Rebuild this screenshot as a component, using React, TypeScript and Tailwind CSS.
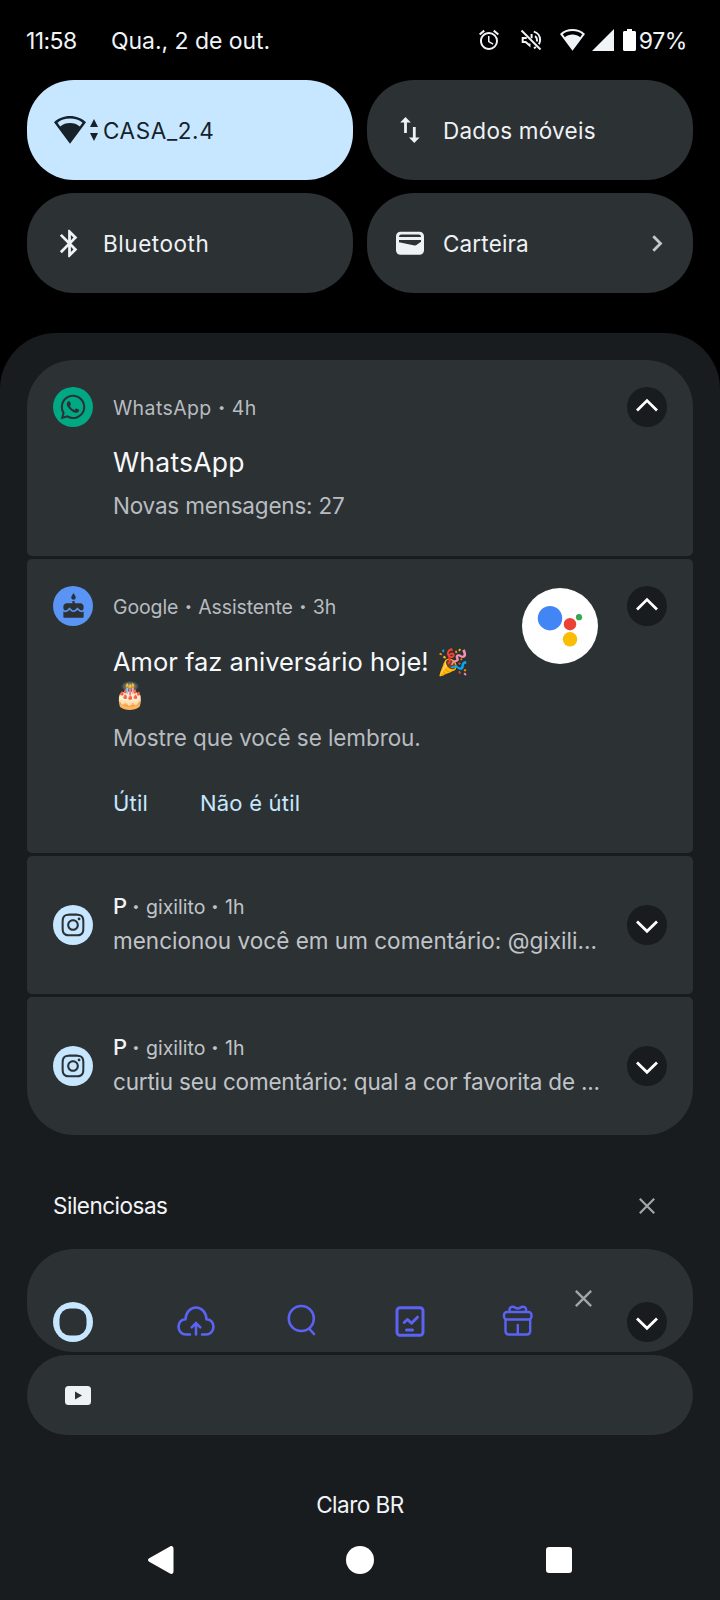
import React from "react";
import { FaInstagram, FaWhatsapp } from "react-icons/fa";
import { MdAlarm, MdBluetooth, MdCake } from "react-icons/md";

interface ExpandButtonProps {
  open?: boolean;
}

const ExpandButton: React.FC<ExpandButtonProps> = ({ open = false }) => (
  <div className="w-10 h-10 shrink-0 rounded-full bg-[#181c1e] flex items-center justify-center">
    <svg width="24" height="24" viewBox="0 0 24 24" fill="none" stroke="#fff" strokeWidth="2.8">
      <path d={open ? "M2 15.400 12 5.600l10 9.800" : "M2 8.400 12 18.200l10-9.800"} />
    </svg>
  </div>
);

const CloseIcon: React.FC<{ size: number }> = ({ size }) => (
  <svg width={size} height={size} viewBox="0 0 16 16" fill="none" stroke="#a3a6a8" strokeWidth="2.2">
    <path d="M.8.8l14.4 14.4M15.2.8.8 15.2" />
  </svg>
);

const WifiIcon: React.FC<{ className: string }> = ({ className }) => (
  <svg className={className} viewBox="0 0 32 28">
    <path
      fill="currentColor"
      fillRule="evenodd"
      d="M16 0C9.8 0 4.200 2.300 0 6.200L16 27.800 32 6.200C27.800 2.300 22.200 0 16 0Zm0 2.600c4.900 0 9.200 1.500 12.500 4.100l-2.700 3.700C23.100 8.300 19.700 7.100 16 7.100s-7.100 1.200-9.800 3.300L3.500 6.700C6.800 4.100 11.100 2.600 16 2.600Z"
    />
  </svg>
);

// Separator between the parts of a notification header
const Dot = () => <span className="inline-block w-5 shrink-0 text-center font-black">·</span>;

const StatusBar = () => (
  <div className="h-20 pl-[26px] pr-[33px] flex items-center text-[23px] leading-[32px] text-[#f1f4f7]">
    <span className="w-[85px] pt-px tracking-[-0.6px]">11:58</span>
    <span className="grow pt-px tracking-[-0.05px]">Qua., 2 de out.</span>
    <MdAlarm className="w-6 h-6 mr-[18px]" />
    <svg className="w-6 h-6 mr-[17px]" viewBox="0 0 24 24" fill="none" stroke="currentColor" strokeWidth="2">
      <path d="M2.500 2.500 21.500 21.500" />
      <path d="M10.500 15.500v1.800L6.600 14H3.700v-4h4M12.600 6v4.200" />
      <path d="M14.800 3.600c3.700 1 6.300 4.400 6.300 8.200 0 1.700-.4 3.200-1.200 4.500M16 8.200c1.300.8 2 2.100 2 3.700 0 .6-.1 1.100-.3 1.600M14.800 20c.8-.2 1.500-.5 2.200-.9" />
    </svg>
    <WifiIcon className="w-[25px] h-[22px] mr-[7px] mb-px" />
    <svg className="w-[22px] h-[22px] mr-[9px] mb-px" viewBox="0 0 22 22">
      <path fill="currentColor" d="M22 0v22H0z" />
    </svg>
    <svg className="w-[13px] h-[22px] mr-[3px] mb-px" viewBox="0 0 13 22">
      <path fill="#fff" d="M4 0h5v2h2.500C12.300 2 13 2.700 13 3.500v17c0 .8-.7 1.500-1.500 1.500h-10C.7 22 0 21.300 0 20.500v-17C0 2.700.7 2 1.500 2H4z" />
    </svg>
    <span className="pt-px tracking-[-0.4px]">97%</span>
  </div>
);

interface TileProps {
  label: string;
  icon: React.ReactNode;
  tracking: string;
  active?: boolean;
  chevron?: boolean;
}

const Tile: React.FC<TileProps> = ({ label, icon, tracking, active = false, chevron = false }) => (
  <div
    className={`h-[100px] rounded-[47px] flex items-center pl-[27px] pr-[30px] text-[22.5px] leading-[30px] ${
      active ? "bg-[#c6e7ff] text-[#16212a]" : "bg-[#2c3134] text-[#eff2f5]"
    }`}
  >
    <div className="w-[49px] shrink-0 flex items-center">{icon}</div>
    <span className={`grow pt-[2px] ${tracking}`}>{label}</span>
    {chevron && (
      <svg width="11" height="17" viewBox="0 0 11 17" fill="none" stroke="#c4c8cb" strokeWidth="2.8">
        <path d="M1.300 1.300 8.500 8.500l-7.200 7.200" />
      </svg>
    )}
  </div>
);

const QuickSettings = () => (
  <div className="grid grid-cols-2 gap-x-[14px] gap-y-[13px] px-[27px]">
    <Tile
      active
      label="CASA_2.4"
      tracking="tracking-[0.6px]"
      icon={
        <>
          <WifiIcon className="w-8 h-7 shrink-0" />
          <svg className="ml-[4px] w-2 h-[22px] shrink-0" viewBox="0 0 8 22">
            <path fill="currentColor" d="M4 0 8 8H0zM4 22 0 14h8z" />
          </svg>
        </>
      }
    />
    <Tile
      label="Dados móveis"
      tracking="tracking-[0.25px]"
      icon={
        <svg className="ml-[6px] w-5 h-[26px]" viewBox="0 0 20 26" fill="none" stroke="currentColor" strokeWidth="2.800">
          <path d="M5.500 16V3M14.300 10v13" />
          <path d="M5.500 0 10.800 5.600H.2zM14.300 26 9 20.400h10.600z" fill="currentColor" stroke="none" />
        </svg>
      }
    />
    <Tile
      label="Bluetooth"
      tracking="tracking-[0.55px]"
      icon={<MdBluetooth className="ml-[-1px] w-[33px] h-[33px]" />}
    />
    <Tile
      label="Carteira"
      tracking="tracking-[0.15px]"
      chevron
      icon={
        <svg className="ml-[2px] w-7 h-6" viewBox="0 0 28 24">
          <rect y=".800" width="28" height="23" rx="4.500" fill="currentColor" />
          <path d="M3 6.100C3 4.300 4 3.500 5.500 3.500h17c1.500 0 2.500.8 2.500 2.600z" fill="#2c3134" />
          <path d="M3 9h22v1.700l-4.600 3.400c-.5.400-1.200.5-1.800.4L3 11.200z" fill="#2c3134" />
        </svg>
      }
    />
  </div>
);

const AppIcon: React.FC<{ className: string; children: React.ReactNode }> = ({ className, children }) => (
  <div className={`w-10 h-10 shrink-0 rounded-full flex items-center justify-center text-[#2c3134] ${className}`}>
    {children}
  </div>
);

const AssistantLogo = () => (
  <svg className="w-[76px] h-[76px] mt-[2px] mr-[29px] shrink-0" viewBox="0 0 76 76">
    <circle cx="38" cy="38" r="38" fill="#fff" />
    <circle cx="28" cy="30.200" r="12.200" fill="#4285f4" />
    <circle cx="48" cy="36.200" r="6.200" fill="#ea4335" />
    <circle cx="57" cy="29.200" r="3.100" fill="#34a853" />
    <circle cx="48" cy="51.300" r="7.200" fill="#fbbc04" />
  </svg>
);

interface SocialRowProps {
  text: string;
  textClass: string;
  className: string;
}

const SocialRow: React.FC<SocialRowProps> = ({ text, textClass, className }) => (
  <div className={`h-[138px] bg-[#2c3134] px-[26px] flex items-center ${className}`}>
    <AppIcon className="bg-[#c6e7ff]">
      <FaInstagram className="w-[26px] h-[26px]" />
    </AppIcon>
    <div className="ml-5 w-[500px] shrink-0 whitespace-nowrap">
      <div className="h-[32px] mt-[-2px] mb-[2px] flex items-baseline text-[19.5px] leading-[32px] text-[#c0c4c8]">
        <span className="w-[13px] text-[22px] font-medium text-[#f1f4f7]">P</span>
        <Dot />
        <span className="w-[59px]">gixilito</span>
        <Dot />
        <span>1h</span>
      </div>
      <div className={`text-[22.5px] leading-[34px] text-[#c0c4c8] ${textClass}`}>{text}</div>
    </div>
    <div className="grow" />
    <ExpandButton />
  </div>
);

const Notifications = () => (
  <div className="px-[27px] pt-[27px] flex flex-col gap-[3px]">
    <div className="h-[196px] rounded-t-[47px] rounded-b-[5px] bg-[#2c3134] px-[26px] pt-[27px] flex items-start">
      <AppIcon className="bg-[#00a884]">
        <FaWhatsapp className="w-[28px] h-[28px]" />
      </AppIcon>
      <div className="ml-5 grow">
        <div className="h-[42px] text-[19.5px] leading-[42px] tracking-[0.4px] text-[#b8bcc0]">
          WhatsApp
          <Dot />
          4h
        </div>
        <div className="mt-[13px] text-[26.5px] tracking-[0.25px] leading-[40px] text-[#f7f9fb]">WhatsApp</div>
        <div className="mt-[7px] text-[22.5px] leading-[34px] tracking-[-0.2px] text-[#b8bcc0]">Novas mensagens: 27</div>
      </div>
      <ExpandButton open />
    </div>

    <div className="h-[294px] rounded-[5px] bg-[#2c3134] px-[26px] pt-[27px] flex items-start">
      <AppIcon className="bg-[#5a94f5]">
        <MdCake className="w-[27px] h-[27px]" />
      </AppIcon>
      <div className="ml-5 grow whitespace-nowrap">
        <div className="h-[42px] text-[19.5px] leading-[42px] tracking-[-0.12px] text-[#b8bcc0]">
          Google
          <Dot />
          Assistente
          <Dot />
          3h
        </div>
        <div className="mt-[17px] text-[25.5px] leading-[33px] text-[#f7f9fb]">
          Amor faz aniversário hoje! <span className="ml-[2px]">🎉</span>
          <br />
          <span className="ml-px">🎂</span>
        </div>
        <div className="mt-[10px] text-[22.5px] leading-[34px] tracking-[-0.08px] text-[#b8bcc0]">
          Mostre que você se lembrou.
        </div>
        <div className="mt-[31px] flex gap-[52px] text-[22px] leading-[34px] tracking-[0.2px] text-[#c6e7ff]">
          <span>Útil</span>
          <span>Não é útil</span>
        </div>
      </div>
      <AssistantLogo />
      <ExpandButton open />
    </div>

    <SocialRow
      text="mencionou você em um comentário: @gixili..."
      textClass="tracking-[0.02px]"
      className="rounded-[5px]"
    />
    <SocialRow
      text="curtiu seu comentário: qual a cor favorita de ..."
      textClass="tracking-[-0.19px]"
      className="rounded-t-[5px] rounded-b-[47px]"
    />
  </div>
);

const ShortcutBar = () => (
  <div className="h-[103px] rounded-[47px] bg-[#2c3134] pl-[26px] pr-[26px] pt-[53px] flex items-start">
    <svg className="w-10 h-10 mr-[84px]" viewBox="0 0 40 40">
      <circle cx="20" cy="20" r="20" fill="#c6e7ff" />
      <rect x="6.500" y="6.500" width="27" height="27" rx="10.500" fill="#2c3134" />
    </svg>
    <svg className="w-[38px] h-[30px] mt-[4px] mr-[72px]" viewBox="0 0 38 30" fill="none" stroke="#5b63f5" strokeWidth="2.600" strokeLinecap="round">
      <path d="M13 28.500H9C4.800 28.500 1.500 25.300 1.500 20.700c0-4 3-7.400 7-7.600C8.700 6.600 13.300 1.500 19 1.500S29.300 6.600 29.500 13.100c4 .2 7 3.600 7 7.600 0 4.600-3.300 7.800-7.500 7.800h-4" />
      <path d="M19 28.500V17.500M14.700 21.300 19 17l4.300 4.300" />
    </svg>
    <svg className="w-[30px] h-[32px] mt-[2px] mr-[78px]" viewBox="0 0 30 32" fill="none" stroke="#5b63f5" strokeWidth="2.600" strokeLinecap="round">
      <circle cx="14.300" cy="14.500" r="12.500" />
      <path d="M22.500 25l4.500 5" />
    </svg>
    <svg className="w-[30px] h-[32px] mt-[4px] mr-[77px]" viewBox="0 0 30 32" fill="none" stroke="#5b63f5" strokeWidth="3" strokeLinecap="round" strokeLinejoin="round">
      <rect x="2" y="1.700" width="26" height="27.500" rx="3" />
      <path d="M9.200 16.500l3.300-3 4 3.700 6-6M11.500 24h6" />
    </svg>
    <svg className="w-[32px] h-[32px] mt-[2px]" viewBox="0 0 32 32" fill="none" stroke="#5b63f5" strokeWidth="2.400" strokeLinecap="round" strokeLinejoin="round">
      <rect x="2" y="8" width="27.500" height="7.500" rx="3" />
      <path d="M3.500 15.800V27c0 2.200 1.300 3.500 3.500 3.500h17.700c2.200 0 3.500-1.300 3.500-3.500V15.800M15.800 21v9.500" />
      <path d="M7.800 7.500C6.800 4.600 8.200 2.800 10.600 2.800c2.200 0 3 1.700 5.200 1.700s3-1.700 5.200-1.700c2.400 0 3.800 1.800 2.800 4.700" />
    </svg>
    <div className="ml-[41px] mt-[-12px]">
      <CloseIcon size={17} />
    </div>
    <div className="grow" />
    <ExpandButton />
  </div>
);

const NavigationBar = () => (
  <div className="mt-[25px] h-7 pl-[147px] pr-[148px] flex items-center justify-between">
    <svg width="27" height="28" viewBox="0 0 27 28">
      <path fill="#fff" d="M26.500 2.500v23c0 2-1.800 3-3.500 2L2.200 15.800c-1.600-.9-1.600-2.700 0-3.600L23 .500c1.700-1 3.500 0 3.500 2z" />
    </svg>
    <div className="w-7 h-7 rounded-full bg-white" />
    <div className="w-[26px] h-[26px] rounded-[3px] bg-white" />
  </div>
);

export default function App() {
  return (
    <div className="w-[720px] h-[1600px] overflow-hidden bg-black font-['Inter','Noto_Color_Emoji',sans-serif]">
      <StatusBar />
      <QuickSettings />
      <div className="mt-10 h-[1267px] rounded-t-[56px] bg-[#191c1f]">
        <Notifications />
        <div className="mt-[55px] px-[53px] h-8 flex items-center justify-between text-[22.5px] leading-8 text-[#f1f4f7]">
          <span className="tracking-[-0.5px]">Silenciosas</span>
          <div className="mr-[12px] mb-px">
            <CloseIcon size={16} />
          </div>
        </div>
        <div className="mt-[27px] px-[27px] flex flex-col gap-[3px]">
          <ShortcutBar />
          <div className="h-20 rounded-[40px] bg-[#2c3134] pl-[38px] flex items-center">
            <svg width="26" height="19" viewBox="0 0 26 19">
              <rect width="26" height="19" rx="3.500" fill="#eff2f5" />
              <path d="M10 5.500v8l7-4z" fill="#2c3134" />
            </svg>
          </div>
        </div>
        <div className="mt-[54px] text-center text-[22.5px] leading-8 tracking-[-0.5px] text-[#f1f4f7]">Claro BR</div>
        <NavigationBar />
      </div>
    </div>
  );
}
